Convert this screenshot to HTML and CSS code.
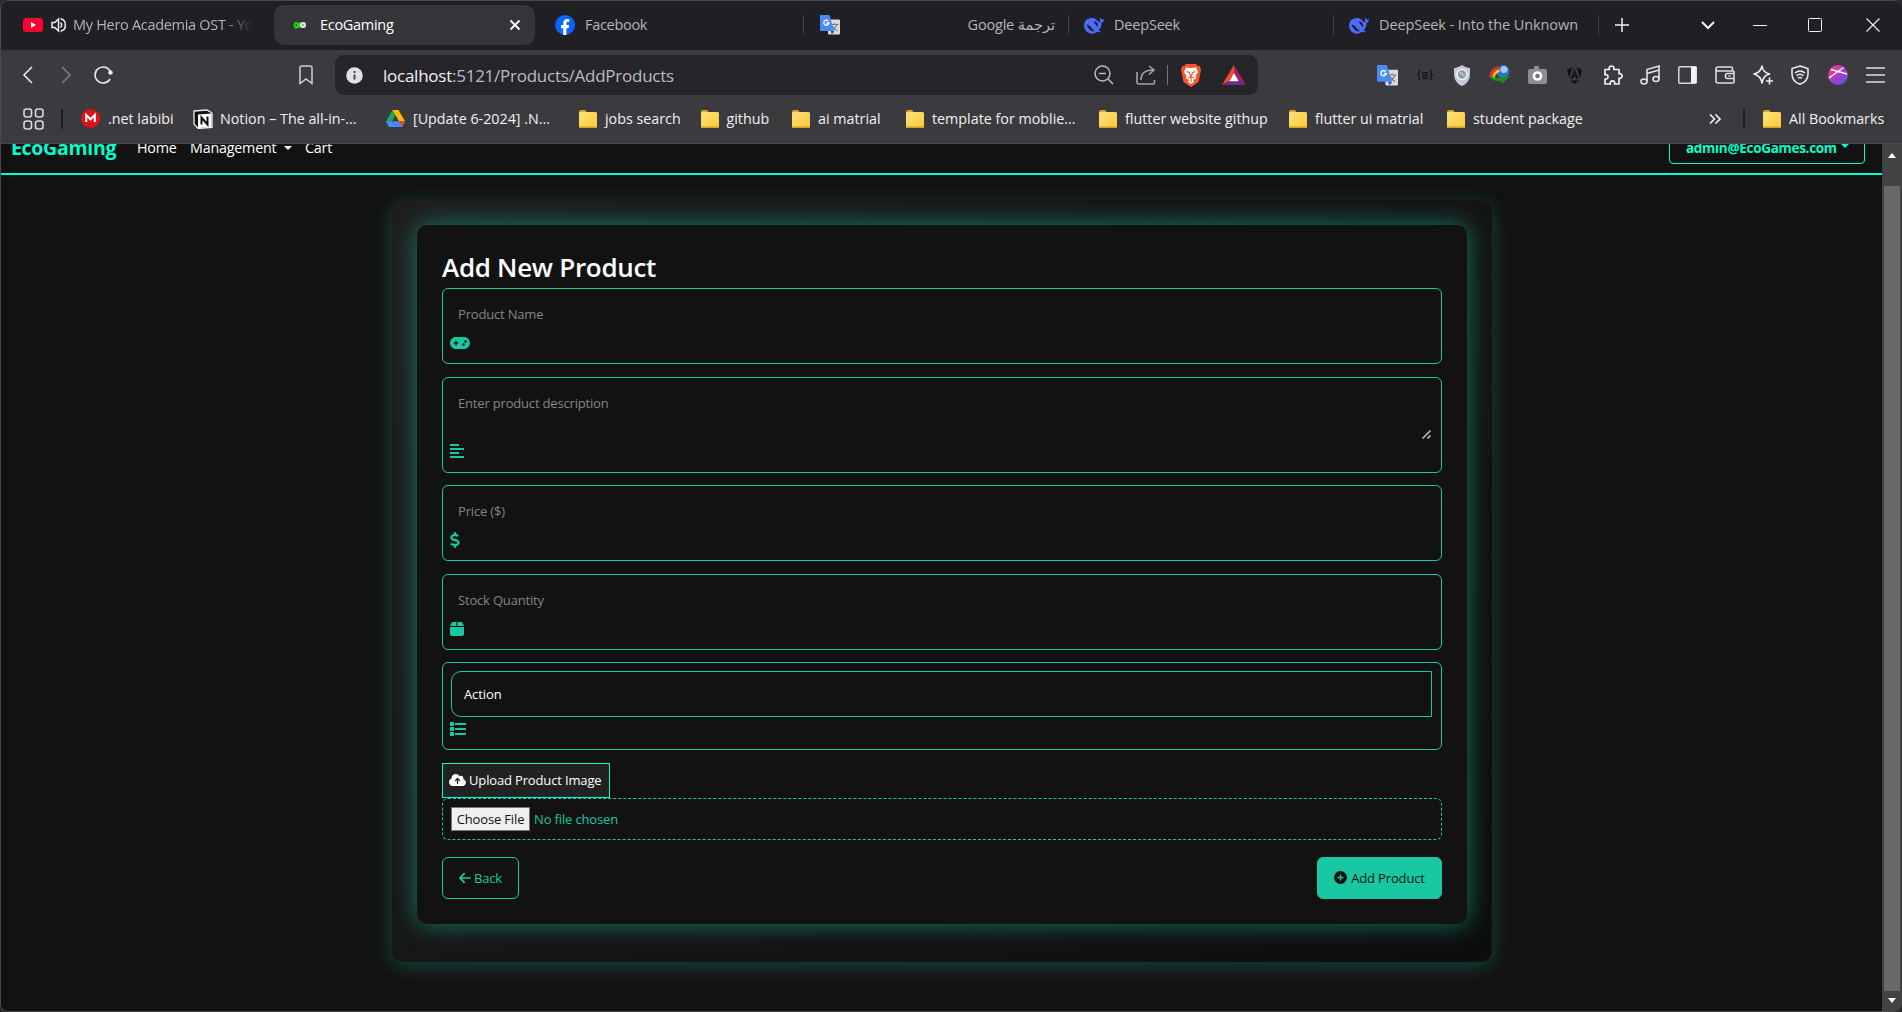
FILE: index.html
```
<!DOCTYPE html>
<html lang="en">
<head>
<meta charset="utf-8">
<title>EcoGaming</title>
<link rel="stylesheet" href="styles.css">
</head>
<body>
<svg class="defs" width="0" height="0" aria-hidden="true">
  <defs>
    <linearGradient id="gold" x1="0" y1="0" x2="1" y2="1"><stop offset="0" stop-color="#ffe27a"/><stop offset="1" stop-color="#f9c93a"/></linearGradient>
    <linearGradient id="profile" x1="0" y1="0" x2="1" y2="1"><stop offset="0" stop-color="#ff3d6a"/><stop offset=".5" stop-color="#b13ccb"/><stop offset="1" stop-color="#3f5be8"/></linearGradient>
    <symbol id="folder" viewBox="0 0 20 20"><path d="M1 3a2 2 0 0 1 2-2h4l2 2.500h8v3H1z" fill="#d9a520"/><rect x="1" y="3" width="18" height="16" rx="1.500" fill="url(#gold)"/><path d="M1 17.500h18v0a1.500 1.500 0 0 1-1.500 1.500h-15A1.500 1.500 0 0 1 1 17.500z" fill="#d7a021"/></symbol>
    <symbol id="translate" viewBox="0 0 20 20"><rect x="8" y="4.500" width="12" height="15" rx="1" fill="#dcdcdc"/><path d="M10.500 9.500h8M14.500 8v1.500M17 9.500c-.7 3-3 5-5 6M12.500 11c1 2 3 4 5 5" stroke="#6d7c85" stroke-width="1.100" fill="none"/><path d="M10.500 16h4l-2.500 3.500z" fill="#2a56c6"/><path d="M1 0h8.500l4.500 16H1a1 1 0 0 1-1-1V1a1 1 0 0 1 1-1z" fill="#4a8af4"/><path d="M8.300 6.200A2.500 2.500 0 1 0 8.800 8H6.400" stroke="#fff" stroke-width="1.300" fill="none"/></symbol>
    <symbol id="whale" viewBox="0 0 22 20"><path d="M21.500 3.300c-1.400.9-2.500.6-3.300-.8-.2-.6-.7-.8-.8-.2-.6 1.700-.2 3 .8 4.100-.9.300-1.800.1-2.700-.5-1.800-1.300-2.500-2.900-4.300-3.500-1.200-.4-2.800-.5-4.100-.1C3 2.700.9 5.600.6 9.500c-.3 4.800 3.200 8.800 8 9.100 2.500.1 4.100-.7 5.600-1.900 1.200.5 2.600.6 3.600.1.500-.3.300-.7-.2-.8-.7-.2-1.300-.6-1.700-1.100 2.400-2.300 3.100-5 3-7.900 1.700-.2 2.600-1.600 2.600-3.700z" fill="#4d6bfe"/><path d="M3 9c1.700.2 3.600 1.200 5 3 1.400 2 2.600 3.200 4.300 3.900-2.400.7-4.700-.1-6.500-2.200C4.500 12 3.800 10.600 3 9z" fill="#201f24"/><path d="M11.500 5.500c-.5 1.500 0 2.400 1 3.200 1.200 1 1.800 2 2 3.400 1.300-1.600 1-3.700-.3-5-.8-.8-1.700-1.300-2.700-1.600z" fill="#201f24"/></symbol>
  </defs>
</svg>

<div class="window">
  <header class="chrome">
    <div class="tabstrip">
      <div class="tab tab-first">
        <svg width="20" height="14" viewBox="0 0 20 14"><rect width="20" height="14" rx="3" fill="#ff0033"/><path d="M8 4l5 3-5 3z" fill="#fff"/></svg>
        <svg class="speaker" width="16" height="16" viewBox="0 0 16 16" fill="none" stroke="#eee" stroke-width="1.500"><path d="M1 5.500h2.800L7.500 2v12L3.800 10.500H1zM9.500 5.500c1.500 1.200 1.500 3.800 0 5M9.500 1.800c6.500 1.200 6.500 11.200 0 12.400"/></svg>
        <span class="tab-title fade">My Hero Academia OST - Yo</span>
      </div>
      <div class="tab tab-active">
        <svg width="20" height="20" viewBox="0 0 20 20" fill="none" stroke-width="2"><path d="M10.500 7.500L7.500 12c-1.400 1.400-3 .2-3-1.800s1.900-2.900 3.100-1.300L9.800 12.500" stroke="#25d80f"/><circle cx="13" cy="10" r="1.900" stroke="#d8e8d8" stroke-width="2.400"/></svg>
        <span class="tab-title">EcoGaming</span>
        <svg class="tab-close" width="12" height="12" viewBox="0 0 12 12" stroke="#fff" stroke-width="1.800"><path d="M1.500 1.500l9 9M10.500 1.500l-9 9"/></svg>
      </div>
      <div class="tab">
        <svg width="20" height="20" viewBox="0 0 20 20"><circle cx="10" cy="10" r="10" fill="#0866ff"/><path d="M8.200 20v-6.700H6V10h2.200V8.600c0-3 1.500-4.600 4.300-4.600.6 0 1.200.1 1.700.2v2.700h-1.300c-1.200 0-1.500.6-1.500 1.600V10h2.700l-.5 3.300h-2.200V20z" fill="#fff"/></svg>
        <span class="tab-title">Facebook</span>
      </div>
      <div class="tab divided tab-rtl">
        <svg width="20" height="20"><use href="#translate"/></svg>
        <span class="tab-title rtl" dir="rtl">ترجمة Google</span>
      </div>
      <div class="tab divided tab-whale">
        <svg width="22" height="19"><use href="#whale"/></svg>
        <span class="tab-title">DeepSeek</span>
      </div>
      <div class="tab divided tab-whale tab-last">
        <svg width="22" height="19"><use href="#whale"/></svg>
        <span class="tab-title long">DeepSeek - Into the Unknown</span>
      </div>
      <div class="cap cap-new divided"><svg width="14" height="14" viewBox="0 0 14 14" stroke="#eee" stroke-width="1.500"><path d="M7 0v14M0 7h14"/></svg></div>
      <div class="cap cap-list"><svg width="14" height="9" viewBox="0 0 14 9" fill="none" stroke="#f4f4f4" stroke-width="2"><path d="M1 1l6 6 6-6"/></svg></div>
      <div class="cap cap-min"><svg width="14" height="14" viewBox="0 0 14 14" stroke="#eee"><path d="M0 7.500h14"/></svg></div>
      <div class="cap cap-max"><svg width="14" height="14" viewBox="0 0 14 14" stroke="#eee" fill="none"><rect x=".5" y=".5" width="13" height="13" rx="1"/></svg></div>
      <div class="cap cap-close"><svg width="14" height="14" viewBox="0 0 14 14" stroke="#eee" stroke-width="1.200"><path d="M.5.5l13 13M13.500.5l-13 13"/></svg></div>
    </div>

    <div class="toolbar">
      <div class="nav-icons">
        <svg width="38" height="20" viewBox="0 0 38 20" fill="none" stroke="#e8e8e8" stroke-width="1.600"><path d="M23 2l-8 8 8 8"/></svg>
        <svg width="38" height="20" viewBox="0 0 38 20" fill="none" stroke="#7d7c82" stroke-width="1.600"><path d="M15 2l8 8-8 8"/></svg>
        <svg width="38" height="20" viewBox="0 0 38 20" fill="none" stroke="#e8e8e8" stroke-width="1.600"><path d="M25.500 7A8 8 0 1 0 25 14"/><circle cx="25.500" cy="7.500" r="2.300" fill="#e8e8e8" stroke="none"/></svg>
      </div>
      <svg class="mark" width="14" height="20" viewBox="0 0 14 20" fill="none" stroke="#cfcfd2" stroke-width="1.500"><path d="M1 3a2 2 0 0 1 2-2h8a2 2 0 0 1 2 2v15.500l-6-4.500-6 4.500z"/></svg>
      <div class="address">
        <svg width="17" height="17" viewBox="0 0 17 17"><circle cx="8.500" cy="8.500" r="8.300" fill="#e1e0e6"/><path d="M8.500 7.500v5M8.500 4v2" stroke="#3b3a3f" stroke-width="1.800"/></svg>
        <span class="url"><b>localhost</b>:5121/Products/AddProducts</span>
        <div class="address-icons">
          <svg class="i-zoom" width="20" height="20" viewBox="0 0 20 20" fill="none" stroke="#b9b9bd" stroke-width="1.500"><circle cx="8.500" cy="8.500" r="7.500"/><path d="M14 14l5 5M5 8.500h7"/></svg>
          <svg class="i-share" width="20" height="20" viewBox="0 0 20 20" fill="none" stroke="#a5a5a9" stroke-width="1.600"><path d="M1 7v10a2 2 0 0 0 2 2h14a1.500 1.500 0 0 0 1.500-1.500V15M5 15c0-6 4-10 12-10M13 1l5 4-5 4.500"/></svg>
          <i class="bar"></i>
          <svg class="i-brave" width="20" height="23" viewBox="0 0 20 23"><path d="M5 0h10l2 2.200 1.800-.2L20 6l-2.500 12L10 23l-7.500-5L0 6l1.200-4L3 2.200z" fill="#fb542b"/><path d="M10 4l5-.5L17 8l-2.500 4 .5 2.500-3 1.500 1 2-3 2-3-2 1-2-3-1.500.5-2.500L3 8l2-4.500z" fill="#fff"/><path d="M5.500 7.500l3 1 1.500 5 1.500-5 3-1M7 14l3-1 3 1M10 13v5" stroke="#fb542b" stroke-width="1.100" fill="none"/></svg>
          <svg class="i-bat" width="24" height="20" viewBox="0 0 24 20"><path d="M12 0L0 20l7.500-4L12 8z" fill="#ff4724"/><path d="M12 0l12 20-7.500-4L12 8z" fill="#9e1f63"/><path d="M0 20h24l-7.500-4.500h-9z" fill="#662d91"/><path d="M12 8l4.700 8.200H7.300z" fill="#fff"/></svg>
        </div>
      </div>
      <div class="extensions">
        <svg width="21" height="21" viewBox="0 0 20 20"><use href="#translate"/></svg>
        <svg width="16" height="12" viewBox="0 0 16 12" fill="none" stroke="#161616" stroke-width="1.400"><path d="M3.500 1C1 1 3 5 .8 6 3 7 1 11 3.500 11M12.500 1c2.500 0 .5 4 2.700 5-2.200 1-.2 5-2.700 5M5 4h6M5 6.500h6M5 9h6"/></svg>
        <svg width="18" height="21" viewBox="0 0 18 21"><path d="M9 0c2.500 1.800 5 2.700 8 3v6c0 6-3.500 10-8 12C4.500 19 1 15 1 9V3c3-.3 5.500-1.200 8-3z" fill="#c3ccd8"/><circle cx="9" cy="9.500" r="5" fill="#8b9bb0" stroke="#eef2f6" stroke-width="1.600"/><path d="M6.500 9c1-2 3-1 3 0s1 2 2 1" stroke="#eef2f6" fill="none"/></svg>
        <svg width="21" height="20" viewBox="0 0 21 20"><circle cx="14" cy="6.500" r="6.500" fill="#2c6fd0"/><circle cx="15" cy="4.500" r="3.500" fill="#9fcdf6"/><path d="M10 3C5 4 2 7 2 12" stroke="#e33b1e" stroke-width="3" fill="none"/><path d="M10.500 5.500C7 6.500 5 9 5 13" stroke="#f7c81e" stroke-width="2.800" fill="none"/><path d="M9 8c-2 1-2.500 3-2 5l14-2-8 8-1.500-3C7 16.500 2 15 0 11c1.500 1.500 3 2 5 2 0-2 2-4.500 4-5z" fill="#1f8f1a"/></svg>
        <svg width="19" height="18" viewBox="0 0 19 18"><path d="M6 0h5v3H6z" fill="#8e8e8e"/><rect y="3" width="19" height="15" rx="2" fill="#8e8e8e"/><circle cx="9.500" cy="10" r="3.600" fill="#777" stroke="#fff" stroke-width="2.500"/></svg>
        <svg width="15" height="17" viewBox="0 0 15 17" fill="#111"><path d="M0 3L5.500 0 2 11zM15 3L9.500 0 13 11zM7.500 2l4 10H9.700l-.8-2H6.100l-.8 2H3.500zm0 3.500L6.600 8.500h1.800zM3 13.500h9L7.500 17z"/></svg>
        <svg width="20" height="20" viewBox="0 0 20 20" fill="none" stroke="#efefef" stroke-width="1.700"><path d="M2 4.500h4.500C5.500 2 7 1 8.500 1S11.500 2 10.800 4.500H16v4.300c2-.6 3 .7 3 2.200s-1 2.800-3 2.200V19h-4.500c.7-2-.3-3.200-2-3.200S6.800 17 7.500 19H2v-5c2 .4 3-.7 3-2.200S4 9.300 2 9.800z" stroke-linejoin="round"/></svg>
        <svg width="20" height="20" viewBox="0 0 20 20" fill="none" stroke="#e2e2e4" stroke-width="1.600"><ellipse cx="4" cy="16.500" rx="3" ry="2.500"/><ellipse cx="16" cy="14" rx="3" ry="2.500"/><path d="M7 16.500V4.500L19 1v13M7 8.500L19 5"/></svg>
        <svg width="19" height="18" viewBox="0 0 19 18"><rect x=".8" y=".8" width="17.400" height="16.400" rx="1" fill="none" stroke="#d8d8da" stroke-width="1.500"/><path d="M13 1h5.500v16H13z" fill="#f2f2f2"/></svg>
        <svg width="20" height="18" viewBox="0 0 20 18" fill="none" stroke="#dedee0" stroke-width="1.600"><path d="M17.500 4.500V2.500a1.500 1.500 0 0 0-1.500-1.500H3a2 2 0 0 0 0 4h15a1 1 0 0 1 1 1v10a1 1 0 0 1-1 1H3a2 2 0 0 1-2-2V3M19 7.500h-6.500a2 2 0 0 0-2 2v1a2 2 0 0 0 2 2H19M13.500 10h2"/></svg>
        <svg width="20" height="20" viewBox="0 0 20 20" fill="none" stroke="#efefef" stroke-width="1.600" stroke-linejoin="round"><path d="M9 1c.6 4.500 2.500 6.800 7.500 8-3 .8-4.200 1.500-5.500 3.500C10 14 9.600 15.500 9 18c-.8-5-2.700-7.500-8-9 5-1.200 7.200-3.500 8-8z"/><path d="M16.500 12.500v7M13 16h7"/></svg>
        <svg width="18" height="20" viewBox="0 0 18 20" fill="none" stroke="#efefef" stroke-width="1.500"><path d="M9 1l8 2.500V9c0 5-3 8.500-8 10.300C4 17.500 1 14 1 9V3.500zM4 8c3-2.500 7-2.500 10 0M5.500 10.700c2-1.700 5-1.700 7 0M7.200 13.200c1-.8 2.600-.8 3.600 0"/></svg>
        <svg width="20" height="20" viewBox="0 0 20 20"><circle cx="10" cy="10" r="10" fill="url(#profile)"/><path d="M1 13L15.500 2.500M3 4.500l16 4.500" stroke="#fff" stroke-width="1.300"/></svg>
        <svg width="19" height="16" viewBox="0 0 19 16" stroke="#e0e0e2" stroke-width="1.600"><path d="M0 1h19M0 8h19M0 15h19"/></svg>
      </div>
    </div>

    <div class="bookmarks">
      <svg class="apps" width="21" height="22" viewBox="0 0 21 22" fill="none" stroke="#d8d8da" stroke-width="1.600"><rect x="1" y="1" width="7.500" height="8" rx="2.500"/><rect x="12.500" y="1" width="7.500" height="8" rx="2.500"/><rect x="1" y="13" width="7.500" height="8" rx="2.500"/><rect x="12.500" y="13" width="7.500" height="8" rx="2.500"/></svg>
      <i class="sep"></i>
      <div class="bookmark b1"><svg width="19" height="19" viewBox="0 0 19 19"><circle cx="9.500" cy="9.500" r="9.500" fill="#e01218"/><path d="M5.200 13V6l4.300 4.200L13.800 6v7" stroke="#fff" stroke-width="2.100" fill="none"/></svg><span>.net labibi</span></div>
      <div class="bookmark b2"><svg width="20" height="20" viewBox="0 0 20 20"><path d="M1 2l13-1 5 3v14.500L5 19.500 1 15z" fill="#111" stroke="#eee" stroke-width="1.300"/><path d="M5 5.500l13.500-1V18L5 19z" fill="#fff"/><path d="M8.500 15.500V8.500l6 7v-8" stroke="#111" stroke-width="2" fill="none"/></svg><span>Notion – The all-in-...</span></div>
      <div class="bookmark b3"><svg width="19" height="17" viewBox="0 0 19 17"><path d="M6.500 0h6L6 11.500 3.200 17 0 11.300z" fill="#1ea362"/><path d="M6.500 0h6L19 11.300h-6z" fill="#ffba00"/><path d="M0 11.300h19L16 17H3z" fill="#4688f4"/><path d="M13 11.300h6L16 17z" fill="#ea4335"/></svg><span>[Update 6-2024] .N...</span></div>
      <div class="bookmark b4"><svg width="20" height="20"><use href="#folder"/></svg><span>jobs search</span></div>
      <div class="bookmark b5"><svg width="20" height="20"><use href="#folder"/></svg><span>github</span></div>
      <div class="bookmark b6"><svg width="20" height="20"><use href="#folder"/></svg><span>ai matrial</span></div>
      <div class="bookmark b7"><svg width="20" height="20"><use href="#folder"/></svg><span>template for moblie...</span></div>
      <div class="bookmark b8"><svg width="20" height="20"><use href="#folder"/></svg><span>flutter website githup</span></div>
      <div class="bookmark b9"><svg width="20" height="20"><use href="#folder"/></svg><span>flutter ui matrial</span></div>
      <div class="bookmark b10"><svg width="20" height="20"><use href="#folder"/></svg><span>student package</span></div>
      <svg class="more" width="12" height="10" viewBox="0 0 12 10" fill="none" stroke="#eee" stroke-width="1.600"><path d="M1 .5L5.500 5 1 9.500M6.500.5L11 5 6.500 9.500"/></svg>
      <i class="sep"></i>
      <div class="bookmark b11"><svg width="20" height="20"><use href="#folder"/></svg><span>All Bookmarks</span></div>
    </div>
  </header>

  <div class="viewport">
    <main class="page">
      <nav class="navbar">
        <span class="brand">EcoGaming</span>
        <span class="link home">Home</span>
        <span class="link mgmt">Management<i class="caret"></i></span>
        <span class="link cart">Cart</span>
        <div class="account"><span>admin@EcoGames.com</span><i class="caret"></i></div>
      </nav>

      <section class="shell">
        <form class="card">
          <h2>Add New Product</h2>
          <div class="field">
            <span class="placeholder">Product Name</span>
            <svg width="20" height="16" viewBox="0 0 640 512"><path d="M192 64C86 64 0 150 0 256S86 448 192 448H448c106 0 192-86 192-192s-86-192-192-192H192zM496 168a40 40 0 1 1 0 80 40 40 0 1 1 0-80zM392 304a40 40 0 1 1 80 0 40 40 0 1 1 -80 0zM168 200c0-13.300 10.700-24 24-24s24 10.700 24 24v32h32c13.300 0 24 10.700 24 24s-10.700 24-24 24H216v32c0 13.300-10.700 24-24 24s-24-10.700-24-24V280H136c-13.300 0-24-10.700-24-24s10.700-24 24-24h32V200z"/></svg>
          </div>
          <div class="field area">
            <span class="placeholder">Enter product description</span>
            <svg class="grip" width="9" height="9" viewBox="0 0 9 9" stroke="#aaa" stroke-width="1.800"><path d="M.5 8.500l8-8M5.500 8.500l3-3"/></svg>
            <svg width="14" height="16" viewBox="0 0 448 512"><path d="M0 32H288V96H0zM0 160H448V224H0zM0 288H288V352H0zM0 416H448V480H0z"/></svg>
          </div>
          <div class="field">
            <span class="placeholder">Price ($)</span>
            <svg width="10" height="16" viewBox="0 0 320 512"><path stroke="#19c8a2" stroke-width="12" d="M160 0c17.700 0 32 14.300 32 32V67.700c1.600 .2 3.100 .4 4.700 .7c.4 .1 .7 .1 1.100 .2l48 8.800c17.400 3.200 28.900 19.900 25.700 37.200s-19.900 28.900-37.200 25.700l-47.500-8.700c-31.300-4.600-58.900-1.500-78.300 6.200s-27.200 18.300-29 28.100c-2 10.700-.5 16.700 1.200 20.400c1.800 3.900 5.500 8.300 12.800 13.200c16.300 10.700 41.300 17.700 73.700 26.300l2.900 .8c28.600 7.600 63.600 16.800 89.600 33.800c14.200 9.300 27.600 21.900 35.900 39.500c8.500 17.900 10.300 37.900 6.400 59.200c-6.900 38-33.100 63.400-65.600 76.700c-13.700 5.600-28.600 9.200-44.400 11V480c0 17.700-14.300 32-32 32s-32-14.300-32-32V445.100c-.4-.1-.9-.1-1.300-.2l-.2 0 0 0c-24.400-3.800-64.500-14.300-91.500-26.300c-16.100-7.200-23.400-26.100-16.200-42.200s26.100-23.400 42.200-16.200c20.900 9.300 55.300 18.500 75.200 21.600c31.900 4.700 58.200 2 76-5.300c16.900-6.900 24.600-16.900 26.800-28.900c1.900-10.600 .4-16.700-1.300-20.400c-1.900-4-5.600-8.400-13-13.300c-16.400-10.700-41.500-17.700-74-26.300l-2.800-.7 0 0C119.400 279.300 84.400 270 58.400 253c-14.200-9.300-27.500-22-35.800-39.600c-8.400-17.900-10.100-37.900-6.100-59.200C23.700 116 52.300 91.200 84.800 78.300c13.300-5.300 27.900-8.900 43.200-11V32c0-17.700 14.300-32 32-32z"/></svg>
          </div>
          <div class="field">
            <span class="placeholder">Stock Quantity</span>
            <svg width="14" height="16" viewBox="0 0 448 512"><path d="M50.700 58.500L0 160H208V32H93.700C75.500 32 58.900 42.300 50.700 58.500zM240 160H448L397.300 58.500C389.100 42.300 372.500 32 354.300 32H240V160zm208 32H0V416c0 35.300 28.700 64 64 64H384c35.300 0 64-28.700 64-64V192z"/></svg>
          </div>
          <div class="field category">
            <div class="select">Action</div>
            <svg width="16" height="16" viewBox="0 0 16 16"><path d="M0 1h4v4H0zM0 6h4v4H0zM0 11h4v4H0zM5 2h11v2H5zM5 7h11v2H5zM5 12h11v2H5z"/></svg>
          </div>
          <div class="upload">
            <div class="upload-label">
              <svg width="17" height="14" viewBox="0 0 640 512"><path d="M144 480C64.500 480 0 415.500 0 336c0-62.800 40.200-116.200 96.200-135.900c-.1-2.700-.2-5.400-.2-8.100c0-88.400 71.600-160 160-160c59.300 0 111 32.200 138.700 80.200C409.900 102 428.300 96 448 96c53 0 96 43 96 96c0 12.200-2.300 23.800-6.400 34.600C596 238.400 640 290.100 640 352c0 70.700-57.300 128-128 128H144zm79-217c-9.400 9.400-9.400 24.600 0 33.900s24.600 9.400 33.900 0l39-39V392c0 13.300 10.700 24 24 24s24-10.700 24-24V257.900l39 39c9.400 9.400 24.600 9.400 33.900 0s9.400-24.600 0-33.900l-80-80c-9.400-9.400-24.600-9.400-33.900 0l-80 80z"/></svg>
              <span>Upload Product Image</span>
            </div>
            <div class="file"><span class="choose">Choose File</span><span class="none">No file chosen</span></div>
          </div>
          <div class="actions">
            <div class="btn back"><svg width="12" height="14" viewBox="0 0 448 512"><path d="M9.400 233.400c-12.500 12.500-12.500 32.800 0 45.300l160 160c12.500 12.500 32.800 12.500 45.300 0s12.500-32.800 0-45.300L109.200 288 416 288c17.700 0 32-14.300 32-32s-14.300-32-32-32l-306.700 0L214.600 118.600c12.500-12.500 12.500-32.800 0-45.300s-32.800-12.500-45.300 0l-160 160z"/></svg><span>Back</span></div>
            <div class="btn add"><svg width="13" height="13" viewBox="0 0 13 13"><circle cx="6.500" cy="6.500" r="6.500" fill="#121212"/><path d="M6.500 3.500v6M3.500 6.500h6" stroke="#19c8a2" stroke-width="1.400"/></svg><span>Add Product</span></div>
          </div>
        </form>
      </section>
    </main>
    <aside class="scrollbar">
      <i class="up"></i>
      <i class="thumb"></i>
      <i class="down"></i>
    </aside>
  </div>
</div>
</body>
</html>
```
FILE: styles.css
```
* { box-sizing: border-box; }
html, body { margin: 0; height: 100%; overflow: hidden; background: #2b2b2e; }
body { font-family: "Open Sans", "Noto Sans", "DejaVu Sans", sans-serif; color: #fff; }
.defs { position: absolute; }
svg { flex: none; display: block; }
i { flex: none; }

.window { width: 1902px; height: 1012px; display: flex; flex-direction: column; border: 1px solid #4a4a4c; border-right-width: 0; border-radius: 9px 9px 8px 8px; overflow: hidden; background: #201f24; }
.chrome { flex: none; height: 143px; background: #3b3a3f; border-bottom: 1px solid #47464b; }

/* tabs */
.tabstrip { display: flex; align-items: center; height: 49px; background: #201f24; padding: 0 0 1px 4px; }
.tab { position: relative; flex: none; display: flex; align-items: center; width: 266px; height: 40px; padding-left: 18px; }
.tab-title { margin-left: 10px; font-size: 14.5px; letter-spacing: -0.3px; color: #b5b4b8; white-space: nowrap; line-height: 20px; }
.tab-first { width: 269px; }
.speaker { margin-left: 8px; }
.tab-first .tab-title { margin-left: 6px; width: 182px; overflow: hidden; }
.fade { -webkit-mask-image: linear-gradient(90deg, #000 150px, transparent 180px); mask-image: linear-gradient(90deg, #000 150px, transparent 180px); }
.tab-active { width: 261px; margin-right: 2px; padding-left: 16px; background: #36353a; border-radius: 10px; }
.tab-active .tab-title { color: #fff; }
.tab-close { margin-left: auto; margin-right: 14px; }
.divided::before { content: ""; position: absolute; left: 0; top: 10px; width: 1px; height: 20px; background: #414045; }
.tab-rtl { width: 265px; padding-left: 17px; }
.rtl { margin-left: auto; margin-right: 13px; letter-spacing: -0.2px; }
.tab-whale { width: 265px; padding-left: 15px; }
.tab-whale .tab-title { margin-left: 9px; letter-spacing: -0.2px; }
.tab-whale .long { letter-spacing: -0.08px; }
.cap { position: relative; flex: none; height: 40px; display: flex; align-items: center; justify-content: center; }
.cap-new { width: 48px; }
.cap-list { width: 52px; margin-left: 36px; }
.cap-min { width: 52px; }
.cap-max { width: 58px; }
.cap-close { width: 56px; margin-left: 1px; }

/* toolbar */
.toolbar { display: flex; align-items: center; height: 50px; padding: 0 8px 0 8px; }
.nav-icons { display: flex; }
.mark { margin-left: 176px; }
.address { display: flex; align-items: center; width: 923px; height: 40px; margin-left: 22px; padding: 0 12px 0 11px; border-radius: 9px; background: #26252a; }
.url { margin-left: 20px; font-size: 17px; letter-spacing: -0.25px; color: #bcbbc0; white-space: nowrap; }
.url b { font-weight: 400; color: #f2f2f2; }
.address-icons { display: flex; align-items: center; margin-left: auto; }
.i-share { margin-left: 22px; }
.bar { width: 1px; height: 20px; margin-left: 11px; background: #76757a; }
.i-brave { margin-left: 13px; }
.i-bat { margin-left: 21px; }
.extensions { display: grid; grid-template-columns: repeat(14, 37.540px); justify-items: center; align-items: center; margin-left: auto; }

/* bookmarks */
.bookmarks { display: flex; align-items: center; height: 37px; padding-left: 22px; }
.bookmarks .sep { width: 2px; height: 20px; margin-left: 17px; background: #1e1d22; border-radius: 1px; }
.bookmark { display: flex; align-items: center; gap: 7px; white-space: nowrap; font-size: 14.300px; letter-spacing: 0; color: #f1f1f2; }
.b1 { width: 112px; margin-left: 18px; gap: 8px; }
.b2 { width: 193px; }
.b3 { width: 192px; gap: 8px; }
.b4 { width: 121.500px; }
.b5 { width: 91.500px; }
.b6 { width: 114px; }
.b7 { width: 193px; }
.b8 { width: 190px; }
.b9 { width: 158px; }
.more { margin-left: auto; }
.bookmarks .more + .sep { margin-left: 22px; }
.b11 { width: 140px; margin-left: 17px; }

/* page */
.viewport { display: flex; flex: 1; min-height: 0; background: #121212; }
.page { flex: 1; min-width: 0; overflow: hidden; }
.navbar { display: flex; align-items: center; height: 62px; margin-top: -31px; padding: 0 17px 0 10px; border-bottom: 2px solid #00ffcc; }
.brand { width: 126px; font-size: 19.500px; line-height: 24px; font-weight: 700; letter-spacing: -0.3px; color: #00ffcc; padding-top: 10px; }
.link { display: flex; align-items: center; font-size: 14.300px; letter-spacing: -0.2px; padding-top: 9px; }
.home { width: 53px; }
.mgmt { width: 115px; }
.caret { border: 4px solid transparent; border-top-color: currentColor; border-bottom: 0; }
.mgmt .caret { margin-left: 8px; }
.account { display: flex; align-items: center; justify-content: space-between; align-self: flex-end; width: 196px; height: 42px; margin: 0 0 9px auto; padding: 0 15px 0 16px; border: 1px solid #00ffcc; border-radius: 4px; color: #00ffcc; font-weight: 700; font-size: 13.500px; letter-spacing: -0.3px; padding-top: 9px; }
.account .caret { margin-bottom: 3px; }

.shell { width: 1100px; height: 762px; margin: 25px 0 0 391px; padding: 25px; border-radius: 12px; background: linear-gradient(135deg, #1e1e1e, #0d0d0d); box-shadow: 0 4px 20px rgba(26, 200, 162, .3); }
.card { height: 699px; padding: 25px; border-radius: 10px; background: #121212; box-shadow: 0 0 25px rgba(26, 200, 162, .55); display: flex; flex-direction: column; }
h2 { margin: 0; height: 38px; font-size: 26px; line-height: 35px; font-weight: 600; letter-spacing: -0.3px; }
.field { position: relative; flex: none; height: 76px; margin-bottom: 12.600px; padding: 15px 7px 0; border: 1px solid #19c8a2; border-radius: 6px; fill: #19c8a2; }
.placeholder { display: block; height: 31px; margin: 0 0 0 8px; font-size: 13px; line-height: 20px; letter-spacing: -0.18px; color: #868686; }
.area { height: 96px; }
.area .placeholder { height: 50px; }
.grip { position: absolute; right: 10px; top: 52px; }
.category { height: 88px; padding-top: 8px; }
.select { height: 46px; width: 981px; margin: 0 0 4px 1px; padding-left: 12px; border: 1px solid #19c8a2; border-radius: 10px 0 0 10px; font-size: 13px; line-height: 45px; letter-spacing: -0.1px; }
.upload { display: flex; flex-direction: column; align-items: flex-start; font-size: 13px; letter-spacing: -0.15px; }
.upload-label { display: flex; align-items: center; gap: 3px; width: 168px; height: 35px; padding: 0 6px; background: #222; border: 1px solid #00ffcc; fill: #fff; white-space: nowrap; }
.file { display: flex; align-items: center; gap: 4px; width: 100%; height: 42px; padding: 0 8px; border: 1px dashed #19c8a2; border-radius: 6px; color: #19c8a2; }
.choose { width: 79px; height: 24px; line-height: 22px; text-align: center; color: #111; background: #efefef; border: 1px solid #767676; }
.actions { display: flex; justify-content: space-between; margin-top: 17px; }
.btn { display: flex; align-items: center; justify-content: center; gap: 4px; height: 42px; border: 1px solid #19c8a2; border-radius: 6px; font-size: 13px; letter-spacing: -0.15px; white-space: nowrap; }
.back { width: 77px; gap: 3px; color: #19c8a2; fill: #19c8a2; }
.add { width: 125px; background: #19c8a2; color: #121212; }

.scrollbar { flex: none; display: flex; flex-direction: column; align-items: center; width: 20px; background: #424242; }
.up { margin-top: 9px; border: 4px solid transparent; border-bottom: 5px solid #fff; border-top: 0; }
.thumb { width: 16px; height: 805px; margin-top: 28px; background: #686868; }
.down { margin-top: 7px; border: 4px solid transparent; border-top: 5px solid #fff; border-bottom: 0; }
```
